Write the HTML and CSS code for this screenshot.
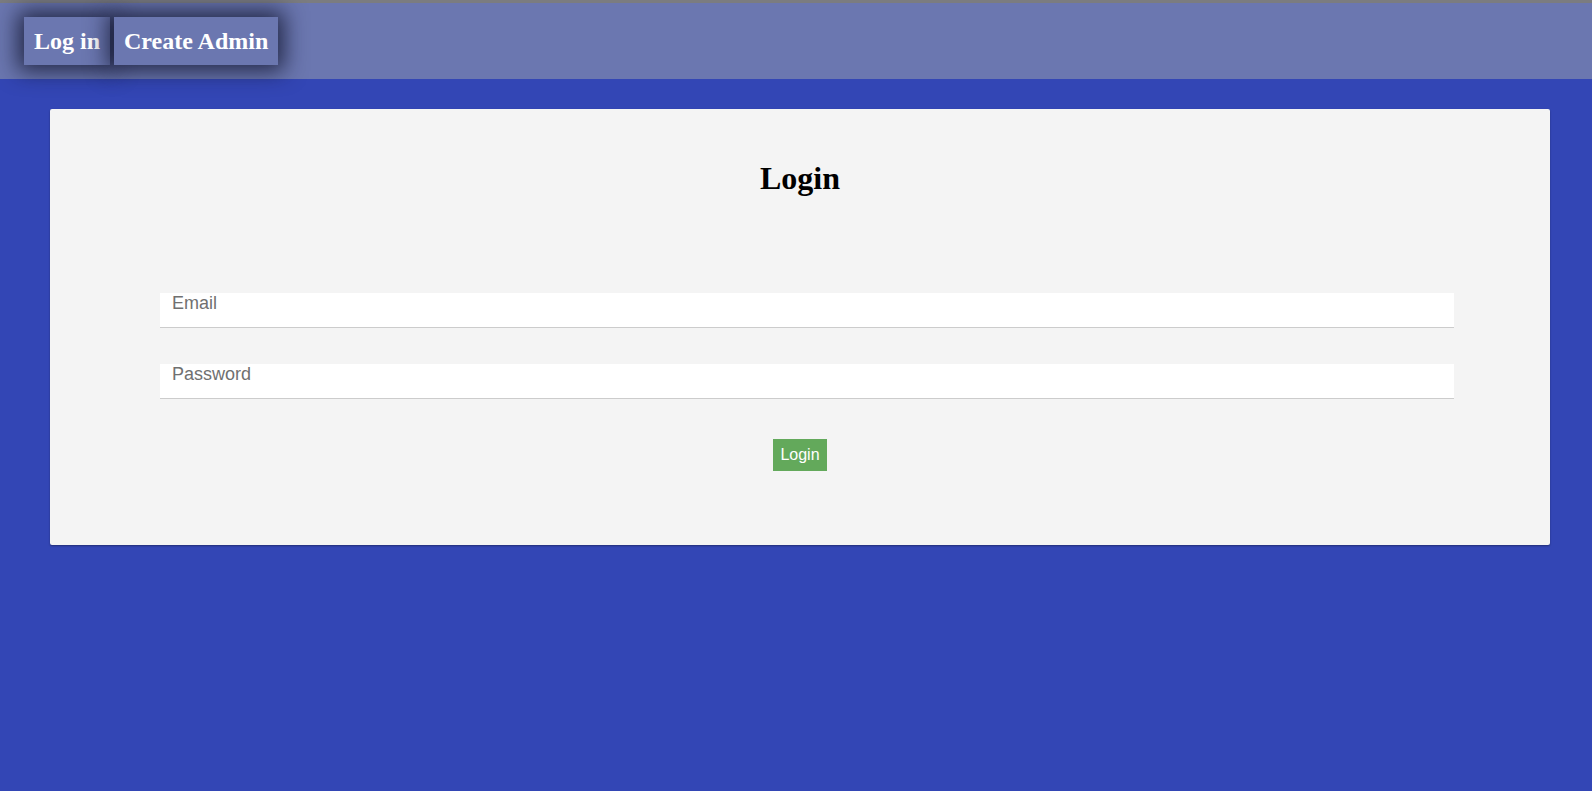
FILE: index.html
```html
<!DOCTYPE html>
<html lang="en">
<head>
<meta charset="utf-8">
<title>Login</title>
<link rel="stylesheet" href="styles.css">
</head>
<body>
<div class="topline"></div>
<nav class="navbar">
  <a class="nav-btn" href="#">Log in</a>
  <a class="nav-btn" href="#">Create Admin</a>
</nav>
<main class="card">
  <h1 class="title">Login</h1>
  <form class="form">
    <input class="field" type="email" placeholder="Email">
    <input class="field" type="password" placeholder="Password">
    <div class="actions">
      <button class="submit" type="button">Login</button>
    </div>
  </form>
</main>
</body>
</html>
```
FILE: styles.css
```css
html, body {
  margin: 0;
  padding: 0;
}
body {
  background: #3346b5;
  min-height: 100vh;
  font-family: "Liberation Serif", "Times New Roman", serif;
}
.topline {
  height: 3px;
  background: #7b7c80;
}
.navbar {
  background: #6b77b0;
  height: 76px;
  box-sizing: border-box;
  padding: 14px 24px;
  display: flex;
  gap: 4px;
  align-items: flex-start;
}
.nav-btn {
  display: block;
  background: #6b77b0;
  color: #fff;
  text-decoration: none;
  font-weight: bold;
  font-size: 24px;
  line-height: 28px;
  padding: 10px 10px;
  box-shadow: 0 0 22px 6px rgba(16, 20, 45, 0.8);
}
.card {
  margin: 30px 42px 0 50px;
  background: #f4f4f4;
  border-radius: 2px;
  box-shadow: 0 1px 2px rgba(0, 0, 0, 0.35);
  padding: 51px 0 74px;
}
.title {
  margin: 0;
  text-align: center;
  font-size: 32px;
  line-height: 36px;
  font-weight: bold;
  color: #000;
}
.form {
  margin: 97px 96px 0 110px;
  display: flex;
  flex-direction: column;
}
.field {
  display: block;
  box-sizing: border-box;
  width: 100%;
  height: 35px;
  margin: 0 0 36px;
  padding: 0 0 13px 12px;
  border: 0;
  border-bottom: 1px solid #cccccc;
  background: #fff;
  font-family: "Liberation Sans", Arial, sans-serif;
  font-size: 18px;
  line-height: 21px;
  color: #333;
  outline: none;
}
.field::placeholder {
  color: #707070;
}
.field:last-of-type {
  margin-bottom: 40px;
}
.actions {
  display: flex;
  justify-content: center;
  margin-left: -110px;
  margin-right: -96px;
}
.submit {
  background: #63a95b;
  color: #fff;
  border: 0;
  border-radius: 0;
  font-family: "Liberation Sans", Arial, sans-serif;
  font-size: 16px;
  line-height: 20px;
  padding: 6px 7px;
  cursor: pointer;
}
```
